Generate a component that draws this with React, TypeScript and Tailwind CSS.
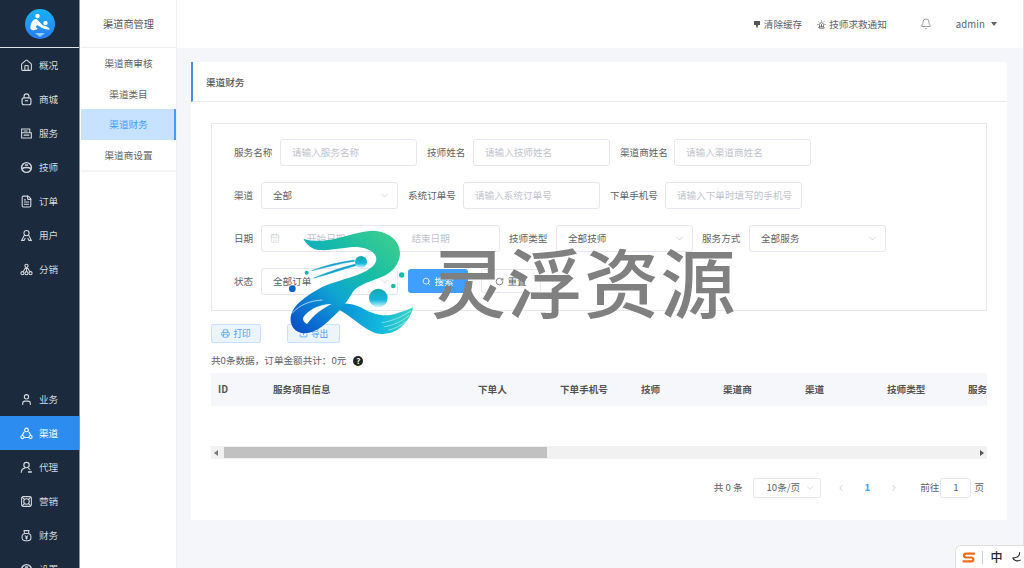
import { Bell, CalendarDays, ChevronDown, ChevronLeft, ChevronRight, FileText, House, Printer, RotateCw, Search, Upload, User, Siren } from 'lucide-react'
import type { ReactNode } from 'react'

const font = "font-['Noto_Sans_CJK_SC','Noto_Sans',sans-serif]"

const Box = ({ className = '' }: { className?: string }) => (
  <svg viewBox="0 0 16 16" className={className} fill="none" stroke="currentColor" strokeWidth="1.3">
    <rect x="2" y="2" width="12" height="12" rx="2" />
    <circle cx="8" cy="8" r="3.4" />
    <path d="M2.5 2.5 5.5 5.5M13.5 2.5 10.5 5.5M2.5 13.5 5.5 10.5M13.5 13.5 10.5 10.5" />
  </svg>
)

const Triple = ({ className = '' }: { className?: string }) => (
  <svg viewBox="0 0 16 16" className={className} fill="none" stroke="currentColor" strokeWidth="1.3">
    <path d="M5.5 5.5 2.8 10M10.5 5.5 13.2 10M5 13h6" />
    <circle cx="8" cy="3.6" r="2.2" />
    <circle cx="3" cy="12.4" r="1.9" />
    <circle cx="13" cy="12.4" r="1.9" />
  </svg>
)

const Ring = ({ className = '' }: { className?: string }) => (
  <svg viewBox="0 0 16 16" className={className} fill="none" stroke="currentColor" strokeWidth="1.8">
    <circle cx="8" cy="8" r="6" />
    <path d="M2.5 9.500c3-2 8-2 11 0" />
    <path d="M6 5h4" />
  </svg>
)

const Ledger = ({ className = '' }: { className?: string }) => (
  <svg viewBox="0 0 16 16" className={className} fill="none" stroke="currentColor" strokeWidth="1.3">
    <path d="M2 7V2.500h10V7M2 7h12v6.500H2z" />
    <path d="M4.500 5h5M4.500 10h7" />
  </svg>
)

const Bag = ({ className = '' }: { className?: string }) => (
  <svg viewBox="0 0 16 16" className={className} fill="none" stroke="currentColor" strokeWidth="1.4">
    <path d="M5 6V4a3 3 0 0 1 6 0v2" />
    <rect x="2.500" y="6" width="11" height="8.500" rx="2.500" />
    <path d="M6 9.500h4" />
  </svg>
)

const Persons = ({ className = '' }: { className?: string }) => (
  <svg viewBox="0 0 16 16" className={className} fill="none" stroke="currentColor" strokeWidth="1.3">
    <circle cx="8" cy="5" r="3.200" />
    <path d="M5.500 7.500 2 14h3l1.500-3M10.500 7.500 14 14h-3l-1.500-3" />
  </svg>
)

const Tree = ({ className = '' }: { className?: string }) => (
  <svg viewBox="0 0 16 16" className={className} fill="none" stroke="currentColor" strokeWidth="1.3">
    <circle cx="8" cy="3.500" r="2" />
    <circle cx="3" cy="12.500" r="1.900" />
    <circle cx="8" cy="12.500" r="1.900" />
    <circle cx="13" cy="12.500" r="1.900" />
    <path d="M7 5.500 3.800 10.800M8 5.500v5M9 5.500l3.200 5.300" />
  </svg>
)

const Agent = ({ className = '' }: { className?: string }) => (
  <svg viewBox="0 0 16 16" className={className} fill="none" stroke="currentColor" strokeWidth="1.4">
    <circle cx="8" cy="5" r="3.300" />
    <path d="M1.500 14.500c0-3.500 2.500-5.500 5-6M10 9c1.200.3 2 1 2.600 2" />
    <path d="M10 13.500h4.500" strokeWidth="2" />
  </svg>
)

const MoneyBag = ({ className = '' }: { className?: string }) => (
  <svg viewBox="0 0 16 16" className={className} fill="none" stroke="currentColor" strokeWidth="1.3">
    <path d="M5.500 5.500 5 2h6l-.5 3.500" />
    <rect x="2.500" y="5.500" width="11" height="9" rx="4" />
    <path d="M6 8l2 2 2-2M8 10v3M6.300 11h3.400" />
  </svg>
)

const topNav = [
  { label: '概况', icon: <House className="size-[13px]" /> },
  { label: '商城', icon: <Bag className="size-[13px]" /> },
  { label: '服务', icon: <Ledger className="size-[13px]" /> },
  { label: '技师', icon: <Ring className="size-[13px]" /> },
  { label: '订单', icon: <FileText className="size-[13px]" /> },
  { label: '用户', icon: <Persons className="size-[13px]" /> },
  { label: '分销', icon: <Tree className="size-[13px]" /> },
]

const bottomNav = [
  { label: '业务', icon: <User className="size-[13px]" /> },
  { label: '渠道', icon: <Triple className="size-[13px]" />, active: true },
  { label: '代理', icon: <Agent className="size-[13px]" /> },
  { label: '营销', icon: <Box className="size-[13px]" /> },
  { label: '财务', icon: <MoneyBag className="size-[13px]" /> },
  { label: '设置', icon: <Ring className="size-[13px]" /> },
]

const NavItem = ({ label, icon, active }: { label: string; icon: ReactNode; active?: boolean }) => (
  <div className={`flex h-[34px] shrink-0 items-center pl-[20px] gap-[6px] text-[9.6px] ${active ? 'bg-[#2d8cf0] text-white' : 'text-[#d5d9de]'}`}>
    {icon}
    <span>{label}</span>
  </div>
)

const Label = ({ children, className = '' }: { children: ReactNode; className?: string }) => (
  <span className={`shrink-0 text-[9.6px] text-[#606266] ${className}`}>{children}</span>
)

const Input = ({ placeholder, className = 'w-[137px]' }: { placeholder: string; className?: string }) => (
  <div className={`flex h-[26.5px] shrink-0 items-center rounded-[3px] border border-[#e4e7ed] bg-white pl-[11px] text-[9.6px] text-[#c0c4cc] ${className}`}>
    {placeholder}
  </div>
)

const Select = ({ value }: { value: string }) => (
  <div className="flex h-[26.5px] w-[137px] shrink-0 items-center justify-between rounded-[3px] border border-[#e4e7ed] bg-white pl-[11px] pr-[7px] text-[9.6px] text-[#606266]">
    {value}
    <ChevronDown className="size-[11px] text-[#c0c4cc]" strokeWidth={1.5} />
  </div>
)

const columns = [
  { title: 'ID', width: 'w-[55px]' },
  { title: '服务项目信息', width: 'w-[205px]' },
  { title: '下单人', width: 'w-[82px]' },
  { title: '下单手机号', width: 'w-[81px]' },
  { title: '技师', width: 'w-[82px]' },
  { title: '渠道商', width: 'w-[82px]' },
  { title: '渠道', width: 'w-[82px]' },
  { title: '技师类型', width: 'w-[81px]' },
  { title: '服务方式', width: 'w-[82px]' },
]

const Watermark = () => (
  <div className="pointer-events-none absolute left-[285px] top-[228px] flex items-start">
    <svg viewBox="0 0 405 336" className="h-[112px] w-[135px] shrink-0">
      <defs>
        <linearGradient id="wm" gradientUnits="userSpaceOnUse" x1="330" y1="20" x2="40" y2="320">
          <stop offset="0" stopColor="#3ccf8e" />
          <stop offset="0.35" stopColor="#16bba8" />
          <stop offset="0.6" stopColor="#0fa6d2" />
          <stop offset="0.85" stopColor="#0a6fd2" />
          <stop offset="1" stopColor="#0a4fc4" />
        </linearGradient>
        <linearGradient id="wt" gradientUnits="userSpaceOnUse" x1="140" y1="240" x2="385" y2="260">
          <stop offset="0" stopColor="#0a8ad6" />
          <stop offset="0.6" stopColor="#10b8dc" />
          <stop offset="1" stopColor="#3fd6c4" />
        </linearGradient>
        <linearGradient id="wb" x1="0.5" y1="0" x2="0.5" y2="1">
          <stop offset="0" stopColor="#12a8a8" />
          <stop offset="0.6" stopColor="#15b6e0" />
          <stop offset="1" stopColor="#d8f8f8" />
        </linearGradient>
      </defs>
      <path d="M140 228C175 225 205 225 235 242C265 258 295 268 330 258C350 252 370 245 385 238C380 255 370 280 345 300C325 316 295 322 270 315C235 303 205 270 170 250C155 240 145 235 140 228Z" fill="url(#wt)" />
      <path d="M55 32C85 42 120 40 160 30C200 20 235 8 265 8C312 10 345 40 345 75C345 105 325 130 295 145C260 160 220 170 205 190C190 215 170 245 140 270C115 295 85 318 55 316C28 312 12 290 18 262C25 232 60 205 110 178C150 158 205 150 245 128C270 115 282 95 268 78C255 62 225 55 195 58C160 62 130 68 105 66C80 64 65 50 55 32Z" fill="url(#wm)" />
      <path d="M55 268C70 245 105 228 140 228C115 240 88 258 66 288C58 285 52 276 55 268Z" fill="#ffffff" />
      <path d="M22 255C45 230 75 218 112 216" stroke="#ffffff" strokeWidth="2.500" fill="none" opacity="0.8" />
      <path d="M290 284C320 280 355 265 378 248M298 296C325 292 352 280 372 262M310 306C330 302 350 292 362 280" stroke="#ffffff" strokeWidth="1.800" fill="none" opacity="0.75" />
      <path d="M80 128C120 112 165 102 208 96L208 100C165 106 125 118 80 128Z" fill="#12a0cf" stroke="#12a0cf" strokeWidth="1.500" />
      <path d="M86 150C130 132 170 118 212 108L212 113C170 124 130 140 86 150Z" fill="#12a0cf" stroke="#12a0cf" strokeWidth="1.500" />
      <circle cx="228" cy="102" r="18" fill="url(#wb)" />
      <circle cx="280" cy="210" r="28" fill="url(#wb)" />
      <circle cx="65" cy="134" r="6" fill="#12b0c0" />
      <circle cx="22" cy="182" r="10" fill="#0a62c8" />
      <circle cx="350" cy="141" r="8" fill="#10bda8" />
      <circle cx="325" cy="174" r="7" fill="#10bda8" />
    </svg>
    <span className="ml-[11px] mt-[8px] whitespace-nowrap text-[75px] font-medium leading-[88px] tracking-[1.5px] text-[#808080]">灵浮资源</span>
  </div>
)

const App = () => {
  return (
    <div className={`relative flex h-[568px] w-[1024px] overflow-hidden bg-[#f5f6fa] ${font}`}>
      <aside className="flex w-[80px] shrink-0 flex-col overflow-hidden border-r border-[#8d96a0] bg-[#1b2a3c]">
        <div className="flex h-[48px] shrink-0 items-center justify-center border-b border-[#dfe3e8]">
          <svg viewBox="0 0 30 30" className="size-[30px]">
            <defs>
              <linearGradient id="lg" x1="0.5" y1="0" x2="0.5" y2="1">
                <stop offset="0" stopColor="#17b3f5" />
                <stop offset="1" stopColor="#2a7cf7" />
              </linearGradient>
            </defs>
            <circle cx="15" cy="15" r="15" fill="url(#lg)" />
            <circle cx="12.500" cy="7" r="2.200" fill="#fff" />
            <circle cx="20.500" cy="14" r="2.200" fill="#fff" />
            <path d="M5.500 20C5 15 7.500 10 11.500 10L15 13.500 18 16.500C21 17 24 18 25 20.500 22 20.500 19.500 20 17 19L12.500 16 10.500 18 13 20 8 21.500Z" fill="#fff" />
            <path d="M10 24h10l-5 4Z" fill="#8fd0fb" />
          </svg>
        </div>
        <nav className="flex flex-1 flex-col">
          {topNav.map((item) => <NavItem key={item.label} {...item} />)}
          <div className="h-[96px] shrink-0" />
          {bottomNav.map((item) => <NavItem key={item.label} {...item} />)}
        </nav>
      </aside>

      <aside className="flex w-[97px] shrink-0 flex-col border-r border-[#eef0f4] bg-white pl-px text-[9.6px] text-[#606266]">
        <div className="flex h-[48px] items-center justify-center border-b border-[#eef0f4] text-[10.2px] text-[#555]">渠道商管理</div>
        <div className="border-b-2 border-[#f3f4f7]">
          <div className="flex h-[30.6px] items-center justify-center">渠道商审核</div>
          <div className="flex h-[30.6px] items-center justify-center">渠道类目</div>
          <div className="flex h-[30.6px] items-center justify-center border-r-2 border-[#409eff] bg-[#c6e2ff] pl-[2px] text-[#409eff]">渠道财务</div>
          <div className="flex h-[30.6px] items-center justify-center">渠道商设置</div>
        </div>
      </aside>

      <div className="flex min-w-0 flex-1 flex-col border-r border-[#dcdfe6]">
        <header className="flex h-[48px] shrink-0 items-center justify-end bg-white text-[9.6px] text-[#606266]">
          <svg viewBox="0 0 10 12" className="mr-[4px] h-[9px] w-[6px] fill-[#555]"><path d="M0 0h10v7H7L5.500 12H4.500L3 7H0z" /></svg>
          <span>清除缓存</span>
          <Siren className="ml-[15px] mr-[3px] size-[9px] text-[#555]" />
          <span>技师求救通知</span>
          <Bell className="ml-[33px] size-[12px] text-[#777]" strokeWidth={1.4} />
          <span className="ml-[24px] tracking-[0.1px]">admin</span>
          <span className="ml-[6px] mr-[26px] size-0 border-x-[3.5px] border-t-[4px] border-x-transparent border-t-[#606266]" />
        </header>

        <main className="px-[14px] pt-[14px]">
          <section className="h-[458px] w-[816px] bg-white">
            <div className="flex h-[40px] items-center border-b border-[#e8e9ec] border-l-2 border-l-[#4a90e2] pl-[13px] pt-px text-[9.6px] font-medium text-[#555]">渠道财务</div>

            <div className="px-[20px] pt-[21px]">
              <div className="flex h-[188px] flex-col gap-[16.5px] border border-[#e6e8ec] pl-[22px] pt-[15px]">
                <div className="flex items-center">
                  <Label className="w-[46px]">服务名称</Label>
                  <Input placeholder="请输入服务名称" />
                  <Label className="ml-[10px] w-[46px]">技师姓名</Label>
                  <Input placeholder="请输入技师姓名" />
                  <Label className="ml-[10px] w-[54px]">渠道商姓名</Label>
                  <Input placeholder="请输入渠道商姓名" />
                </div>
                <div className="flex items-center">
                  <Label className="w-[27px]">渠道</Label>
                  <Select value="全部" />
                  <Label className="ml-[10px] w-[55px]">系统订单号</Label>
                  <Input placeholder="请输入系统订单号" />
                  <Label className="ml-[10px] w-[55px]">下单手机号</Label>
                  <Input placeholder="请输入下单时填写的手机号" />
                </div>
                <div className="flex items-center">
                  <Label className="w-[27px]">日期</Label>
                  <div className="flex h-[26.5px] w-[239px] shrink-0 items-center rounded-[3px] border border-[#e4e7ed] bg-white pl-[8px] text-[9.6px] text-[#c0c4cc]">
                    <CalendarDays className="size-[10px]" strokeWidth={1.4} />
                    <span className="ml-[27px]">开始日期</span>
                    <span className="ml-[66px]">结束日期</span>
                  </div>
                  <Label className="ml-[9px] w-[47px]">技师类型</Label>
                  <Select value="全部技师" />
                  <Label className="ml-[9px] w-[47px]">服务方式</Label>
                  <Select value="全部服务" />
                </div>
                <div className="flex items-center">
                  <Label className="w-[27px]">状态</Label>
                  <Select value="全部订单" />
                  <button className="ml-[10px] flex h-[24px] w-[60px] items-center justify-center gap-[3px] rounded-[3px] bg-[#409eff] text-[9.6px] text-white">
                    <Search className="size-[9px]" />搜索
                  </button>
                  <button className="ml-[13px] flex h-[24px] w-[60px] items-center justify-center gap-[3px] rounded-[3px] border border-[#e4e7ed] bg-white text-[9.6px] text-[#606266]">
                    <RotateCw className="size-[9px]" />重置
                  </button>
                </div>
              </div>

              <div className="mt-[13px] flex">
                <button className="flex h-[19px] w-[50px] items-center justify-center gap-[3px] rounded-[2px] border border-[#c6e2ff] bg-[#ecf5ff] text-[8.6px] text-[#409eff]">
                  <Printer className="size-[9px]" />打印
                </button>
                <button className="ml-[26px] flex h-[19px] w-[53px] items-center justify-center gap-[3px] rounded-[2px] border border-[#c6e2ff] bg-[#ecf5ff] text-[8.6px] text-[#409eff]">
                  <Upload className="size-[9px]" />导出
                </button>
              </div>

              <div className="mb-[4px] mt-[9px] flex h-[17px] items-center text-[9.6px] text-[#606266]">
                共0条数据，订单金额共计：0元
                <span className="ml-[7px] flex size-[10px] items-center justify-center rounded-full bg-[#222] text-[8px] font-bold text-white">?</span>
              </div>

              <div className="flex h-[33px] items-center overflow-hidden bg-[#f5f7fb] text-[9.6px] font-bold text-[#555]">
                {columns.map((c) => (
                  <div key={c.title} className={`${c.width} shrink-0 whitespace-nowrap pl-[7px]`}>{c.title}</div>
                ))}
              </div>

              <div className="mt-[40px] flex h-[13px] items-center bg-[#f1f1f1]">
                <span className="ml-[3px] size-0 border-y-[3px] border-r-[4px] border-y-transparent border-r-[#777]" />
                <div className="ml-[6px] h-[11px] w-[323px] bg-[#c1c1c1]" />
                <span className="ml-auto mr-[3px] size-0 border-y-[3px] border-l-[4px] border-y-transparent border-l-[#555]" />
              </div>

              <div className="mt-[18px] flex h-[21px] items-center justify-end pr-[3px] text-[9.6px] text-[#606266]">
                <span>共 0 条</span>
                <div className="ml-[10px] flex h-[20px] w-[68px] items-center justify-between rounded-[2px] border border-[#e4e7ed] pl-[13px] pr-[5px]">
                  10条/页
                  <ChevronDown className="size-[10px] text-[#c0c4cc]" strokeWidth={1.5} />
                </div>
                <ChevronLeft className="ml-[15px] size-[10px] text-[#c0c4cc]" />
                <span className="ml-[19px] font-bold text-[#409eff]">1</span>
                <ChevronRight className="ml-[19px] size-[10px] text-[#c0c4cc]" />
                <span className="ml-[21px]">前往</span>
                <div className="ml-px flex h-[20px] w-[31px] items-center justify-center rounded-[3px] border border-[#e4e7ed]">1</div>
                <span className="ml-[3px]">页</span>
              </div>
            </div>
          </section>
        </main>
      </div>

      <Watermark />

      <div className="absolute bottom-0 left-[955px] flex h-[23px] w-[69px] items-center rounded-tl-[6px] border-l border-t border-[#e0e0e0] bg-white pl-[6px]">
        <svg viewBox="0 0 14 11" className="h-[11px] w-[14px]" fill="none" stroke="#f26a1b" strokeWidth="2.300" strokeLinecap="round"><path d="M12.500 1.500H4C1.500 1.500 1.500 5 4 5.500h6c2.500.5 2.500 4-.5 4H1.500" /></svg>
        <span className="ml-[7px] h-[13px] w-px bg-[#ccc]" />
        <span className="ml-[7px] text-[12px] font-medium text-[#222]">中</span>
        <svg viewBox="0 0 12 12" className="ml-[10px] size-[12px]" fill="none" stroke="#222" strokeWidth="1.200"><path d="M8 1C8 5 5 7 1 7c1 3 5 4 8 2" /></svg>
      </div>
    </div>
  )
}

export default App
